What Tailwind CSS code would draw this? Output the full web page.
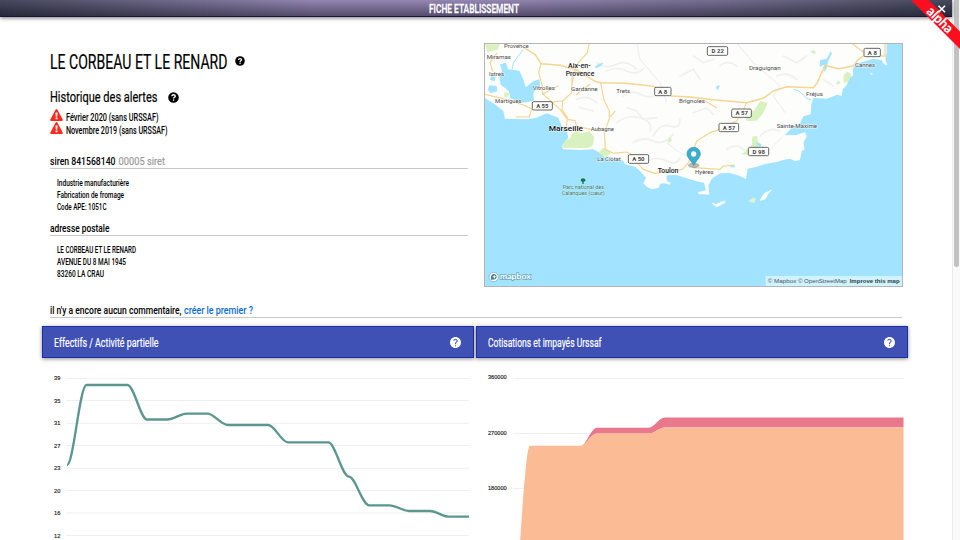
<!DOCTYPE html>
<html lang="fr">
<head>
<meta charset="utf-8">
<title>Fiche établissement</title>
<script src="https://cdn.jsdelivr.net/npm/@tailwindcss/browser@4"></script>
</head>
<body class="relative flex h-[540px] w-[960px] overflow-hidden bg-white font-['Roboto',sans-serif] text-black">
<svg class="hidden">
  <symbol id="help" viewBox="2 2 20 20"><path fill="currentColor" d="M12 2C6.48 2 2 6.48 2 12s4.48 10 10 10 10-4.480 10-10S17.520 2 12 2zm1 17h-2v-2h2v2zm2.070-7.750l-.9.920C13.450 12.900 13 13.500 13 15h-2v-.5c0-1.100.450-2.100 1.170-2.830l1.240-1.260c.370-.360.590-.860.590-1.410 0-1.100-.9-2-2-2s-2 .9-2 2H8c0-2.210 1.790-4 4-4s4 1.790 4 4c0 .880-.360 1.680-.930 2.250z"/></symbol>
  <symbol id="helpb" viewBox="0 0 24 24"><circle cx="12" cy="12" r="11.500" fill="currentColor"/><path d="M8.200 9.300c.3-2.200 1.900-3.300 3.900-3.300 2.200 0 3.700 1.200 3.700 3 0 2.500-3.600 2.700-3.600 5.100" fill="none" stroke="#fff" stroke-width="3"/><circle cx="12.100" cy="17.600" r="1.800" fill="#fff"/></symbol>
  <symbol id="warn" viewBox="0 0 26 24"><path fill="#ff2a1c" d="M11.300 1.200Q13-1 14.700 1.200L25.600 21.300Q26 24 23.600 24H2.400Q0 24 .4 21.300z"/><path fill="#fff" d="M11 7h4.200l-.6 8.300h-3zM11.200 17h3.800v3.500h-3.800z"/></symbol>
</svg>
<main class="flex w-[952px] shrink-0 flex-col">
  <header class="relative h-[17px] border-b border-[#17153a] bg-[linear-gradient(to_bottom,rgba(255,255,255,.08),rgba(20,20,30,.45)),linear-gradient(to_right,#36384e,#8a7cab_33%,#8b7cac_52%,#6a6287_75%,#36384e)] shadow-[0_1px_4px_rgba(0,0,0,.55)]">
    <svg class="block h-4 w-full overflow-visible"><text x="429" y="13.400" textLength="90" lengthAdjust="spacingAndGlyphs" fill="#fff" stroke="#fff" stroke-width=".3" font-size="12.500" font-weight="500">FICHE ETABLISSEMENT</text></svg>
  </header>

  <div class="flex h-[261px] pt-[26px] pl-[50px]">
    <section class="w-[418px] shrink-0">
      <div class="flex h-[42px] items-start gap-2 pt-[8px]">
        <svg class="h-5 w-[177px] overflow-visible"><text y="17.500" textLength="177.500" lengthAdjust="spacingAndGlyphs" font-size="21" stroke="#000" stroke-width=".2">LE CORBEAU ET LE RENARD</text></svg>
        <svg class="mt-[5px] h-[10px] w-[10px]"><use href="#helpb"/></svg>
      </div>
      <div class="flex h-[24px] items-start gap-[11px] pt-[5px]">
        <svg class="h-4 w-[107px] overflow-visible"><text y="12" textLength="107.500" lengthAdjust="spacingAndGlyphs" font-size="14.800" stroke="#000" stroke-width=".2">Historique des alertes</text></svg>
        <svg class="mt-[2px] h-[11px] w-[11px]"><use href="#helpb"/></svg>
      </div>
      <div class="flex h-[13px] gap-[3px]"><svg class="h-[12px] w-[13px]"><use href="#warn"/></svg><svg class="h-3 w-[93px] overflow-visible"><text y="11.700" textLength="92.500" lengthAdjust="spacingAndGlyphs" font-size="11" font-weight="500">Février 2020 (sans URSSAF)</text></svg></div>
      <div class="flex h-[13px] gap-[3px]"><svg class="h-[12px] w-[13px]"><use href="#warn"/></svg><svg class="h-3 w-[102px] overflow-visible"><text y="12" textLength="101.500" lengthAdjust="spacingAndGlyphs" font-size="11" font-weight="500">Novembre 2019 (sans URSSAF)</text></svg></div>
      <div class="mt-[19px] flex h-[15px] gap-[3px] border-b border-[#c8c8c8]">
        <svg class="h-3 w-[65px] overflow-visible"><text y="11.300" textLength="65.500" lengthAdjust="spacingAndGlyphs" font-size="11.800" font-weight="500">siren 841568140</text></svg>
        <svg class="h-3 w-[47px] overflow-visible"><text x=".5" y="11.300" textLength="46.500" lengthAdjust="spacingAndGlyphs" font-size="11.800" fill="#999" stroke="#999" stroke-width=".2">00005 siret</text></svg>
      </div>
      <div class="mt-[9px] pl-[7px]">
        <svg class="block h-3 w-20 overflow-visible"><text y="8" textLength="72" lengthAdjust="spacingAndGlyphs" font-size="9.600" font-weight="500">Industrie manufacturière</text></svg>
        <svg class="block h-3 w-20 overflow-visible"><text y="8" textLength="67" lengthAdjust="spacingAndGlyphs" font-size="9.600" font-weight="500">Fabrication de fromage</text></svg>
        <svg class="block h-3 w-20 overflow-visible"><text y="8" textLength="49.500" lengthAdjust="spacingAndGlyphs" font-size="9.600" font-weight="500">Code APE: 1051C</text></svg>
      </div>
      <div class="mt-[7px] h-[15px] border-b border-[#c8c8c8]"><svg class="block h-3 w-20 overflow-visible"><text y="11" textLength="59.500" lengthAdjust="spacingAndGlyphs" font-size="11.800" font-weight="500">adresse postale</text></svg></div>
      <div class="mt-[9px] pl-[7px]">
        <svg class="block h-3 w-20 overflow-visible"><text y="7.500" textLength="79" lengthAdjust="spacingAndGlyphs" font-size="9.600" font-weight="500">LE CORBEAU ET LE RENARD</text></svg>
        <svg class="block h-3 w-20 overflow-visible"><text y="7.500" textLength="69" lengthAdjust="spacingAndGlyphs" font-size="9.600" font-weight="500">AVENUE DU 8 MAI 1945</text></svg>
        <svg class="block h-3 w-20 overflow-visible"><text y="7.500" textLength="47" lengthAdjust="spacingAndGlyphs" font-size="9.600" font-weight="500">83260 LA CRAU</text></svg>
      </div>
    </section>

    <svg class="ml-[16px] h-[244px] w-[419px] shrink-0 border border-[#b5b5b8]" viewBox="15 24 1251 726" preserveAspectRatio="none">
      <rect x="0" y="0" width="1300" height="800" fill="#a2e4ff"/>
      <path fill="#fdfdfb" d="M0 10H1220V50L1216 70 1222 88 1212 85 1205 72 1180 68 1150 77 1130 82 1118 100 1120 118 1108 125 1100 148 1088 160 1085 180 1072 176 1040 188 1000 186 994 205 992 235 970 241 960 262 935 275 915 298 950 297 975 288 980 302 970 320 974 340 965 345 960 372 945 375 930 368 910 372 890 378 855 384 830 392 803 398 798 430 780 420 750 411 720 412 695 428 685 450 688 476 655 474 655 468 678 463 672 440 650 436 620 427 590 417 560 418 560 436 572 439 570 446 552 442 540 443 537 455 515 460 500 452 490 442 498 425 480 405 465 392 435 385 430 374 390 362 375 365 360 350 340 340 300 342 250 340 245 330 265 305 262 290 245 270 235 245 200 232 170 245 140 250 75 248 70 225 45 205 20 190 0 178z"/>
      <g fill="none" stroke="#f1f0ec" stroke-width="5" stroke-linecap="round">
        <path d="M350 80q30 20 60 5t60 15M380 105q30-15 60 0t50-8M430 180q25-20 50-5t60 0M440 215l30 10 20 25 40-5M410 260q30-25 70-15t30 40M460 320q30-20 60-5t60-20M520 300q20-40 50-30t30-20M290 190q30-15 60 10M300 215l40 10M720 90q20-20 50 0M910 60l40 20 30-20M890 120q30-15 60 10M840 300q30-30 60-15M740 340q30-20 50 0t40 0M1030 130l30 20M600 120l40-20 20 30M640 230l40-15 20 20M500 375q30-15 60 0t40-10M640 60l30 20 30-10"/>
      </g>
      <g fill="none" stroke="#e2e2ee" stroke-width="2">
        <path d="M470 21L480 70 540 140 560 200M770 21L820 80 900 150 880 180 915 230M560 320L600 350 640 370M860 350L910 300"/>
      </g>
      <g fill="#d8f1be">
        <path d="M15 25h45l-8 16-30 8zM245 335l10-20 15-8 8-17 15-5 10 8 25-8 14 18-3 25-15 8zM355 350l15-15 25 15-18 14zM800 255l-8-18 31-14 18-28 22 6-13 30-20 23zM785 355l30-25 2-28 14-3 3 20 10 22-22 18zM1090 120l12-14 12 10-8 20-14 6zM1068 140l8-6 6 8-10 4zM990 45l14-2 4 8-8 3zM72 170h14v12h-12zM563 310l10-6 2 12-10 4z"/>
      </g>
      <path fill="#a2e4ff" d="M60 85L78 80 84 100 118 104 130 130 137 154 160 136 178 130 181 147 160 170 162 194 130 200 92 188 86 165 62 146 57 118 66 105zM33 120l14 4-3 12-14-5zM28 148l22 2 2 16-20 6-8-10zM345 92l12-9 14-3-8 9-14 8zM1020 72l20-4 12-22 4 6-10 20-6 25-6 12-3-22-12 6zM707 155l8-8 4 4-6 12zM830 318l14 6-2 8-10-5zM752 386h12v8h-12z"/>
      <path d="M96 100L100 80 130 40M940 160q20 3 30 17t24 15" fill="none" stroke="#a2e4ff" stroke-width="3"/>
      <g fill="none" stroke="#f4d592" stroke-width="4.500" stroke-linejoin="round" stroke-linecap="round">
        <path d="M118 26L165 55 183 83 240 88 290 102 345 136 360 140 440 142 520 151 575 180 630 183 700 191 800 200 850 187 880 165 920 152 1000 155 1012 140 1035 88 1075 98 1120 90 1135 70 1150 60 1216 60"/>
        <path d="M183 83L176 110 187 150 187 172 240 220 262 250 285 254 290 270 330 280 375 280M327 24L322 50 295 80 276 125 275 170 248 195 187 200M362 140L372 192 388 225 388 248 373 290 376 340 400 352 440 348 480 368M187 175L235 150M248 195L246 220 262 245M50 52L30 80 38 105M15 175L90 193 125 205 155 218 148 243 108 243M262 250L258 275M405 226L388 245M280 125L275 150M290 175L330 145" stroke-width="3.500"/>
        <path d="M800 200L793 215 770 255 710 283 690 290 650 315 640 345 625 380 608 400 525 412 490 400 470 380M640 395L720 400 730 390 760 388M675 195L710 215M1118 24L1150 48M1215 24V60" stroke-width="3.500"/>
      </g>
      <g fill="#fff"><path d="M695 500l15 4 15-8 12 0 0-10-2 15-24 12-10-5zM840 492l12-20 26-12-12 12-10 18-16 4zM1168 110l12 3-6 3z"/><path fill="#dff5c8" d="M805 496l15-11 8 4-6 12z"/></g>
      <g font-family="Roboto,sans-serif" font-size="18" fill="#4a4a4a" stroke="#fff" stroke-opacity=".8" stroke-width="3" paint-order="stroke" stroke-linejoin="round">
        <text x="72" y="35" textLength="74" lengthAdjust="spacingAndGlyphs">Provence</text><text x="20" y="68" textLength="73" lengthAdjust="spacingAndGlyphs">Miramas</text><text x="27" y="119" textLength="45" lengthAdjust="spacingAndGlyphs">Istres</text><text x="158" y="161" textLength="67" lengthAdjust="spacingAndGlyphs">Vitrolles</text><text x="45" y="201" textLength="80" lengthAdjust="spacingAndGlyphs">Martigues</text><text x="273" y="164" textLength="80" lengthAdjust="spacingAndGlyphs">Gardanne</text><text x="409" y="170" textLength="42" lengthAdjust="spacingAndGlyphs">Trets</text><text x="597" y="201" textLength="78" lengthAdjust="spacingAndGlyphs">Brignoles</text><text x="332" y="286" textLength="70" lengthAdjust="spacingAndGlyphs">Aubagne</text><text x="352" y="374" textLength="70" lengthAdjust="spacingAndGlyphs">La Ciotat</text><text x="807" y="103" textLength="95" lengthAdjust="spacingAndGlyphs">Draguignan</text><text x="1125" y="92" textLength="60" lengthAdjust="spacingAndGlyphs">Cannes</text><text x="978" y="180" textLength="51" lengthAdjust="spacingAndGlyphs">Fréjus</text><text x="890" y="275" textLength="121" lengthAdjust="spacingAndGlyphs">Sainte-Maxime</text><text x="645" y="415" textLength="56" lengthAdjust="spacingAndGlyphs">Hyères</text>
        <g fill="#222" font-size="20" font-weight="500"><text x="264" y="95" textLength="68" lengthAdjust="spacingAndGlyphs">Aix-en-</text><text x="257" y="121" textLength="86" lengthAdjust="spacingAndGlyphs">Provence</text><text x="533" y="411" font-size="19" textLength="62" lengthAdjust="spacingAndGlyphs">Toulon</text><text x="206" y="285" font-size="24" textLength="103" lengthAdjust="spacingAndGlyphs" fill="#111">Marseille</text></g>
        <g fill="#3f7767" stroke="#d8f3f6" stroke-width="2" font-size="16"><text x="248" y="459" textLength="124" lengthAdjust="spacingAndGlyphs">Parc national des</text><text x="245" y="477" textLength="129" lengthAdjust="spacingAndGlyphs">Calanques (cœur)</text></g>
      </g>
      <path d="M302 433q0-6 7-6t8 6q-1 4-6 4v7h-4v-7q-5 0-5-4z" fill="#16784f"/>
      <g fill="#fff" stroke="#666" stroke-width="3"><rect x="157" y="197" width="60" height="25" rx="4"/><rect x="524" y="154" width="49" height="25" rx="4"/><rect x="445" y="356" width="61" height="26" rx="4"/><rect x="682" y="32" width="61" height="26" rx="4"/><rect x="1152" y="37" width="49" height="25" rx="4"/><rect x="755" y="219" width="59" height="25" rx="4"/><rect x="717" y="262" width="59" height="25" rx="4"/><rect x="805" y="334" width="61" height="25" rx="4"/></g>
      <g font-family="Roboto,sans-serif" font-size="18" font-weight="700" fill="#444" text-anchor="middle"><text x="187" y="216" textLength="36">A 55</text><text x="548" y="173" textLength="27">A 8</text><text x="475" y="375" textLength="37">A 50</text><text x="713" y="51" textLength="37">D 22</text><text x="1177" y="56" textLength="27">A 8</text><text x="785" y="238" textLength="37">A 57</text><text x="747" y="281" textLength="37">A 57</text><text x="836" y="353" textLength="37">D 98</text></g>
      <ellipse cx="641" cy="388" rx="17" ry="8" fill="#333" opacity=".35"/>
      <path d="M641 388C634 374 621 365 621 353a20 19 0 0 1 40 0C661 365 648 374 641 388z" fill="#3aaecb" stroke="#2b93ae" stroke-width="2"/><circle cx="641" cy="354" r="8" fill="#fff"/>
      <circle cx="41" cy="723" r="14" fill="#fff" stroke="#6ca5ba" stroke-width="2"/><path d="M33 731q-2-17 9-17 8 1 8 8 0 10-17 9z" fill="#4b8297"/><path d="M43 717l2 4 4 1-4 2-2 4-2-4-4-2 4-1z" fill="#fff"/>
      <text x="60" y="729" textLength="92" lengthAdjust="spacingAndGlyphs" font-family="Lato,sans-serif" font-size="24" font-weight="700" fill="#fff" stroke="#6ca5ba" stroke-width="4" paint-order="stroke">mapbox</text>
      <rect x="857" y="720" width="420" height="40" fill="#fff" opacity=".5"/>
      <g font-family="'Liberation Sans',sans-serif" font-size="18.500" fill="#46555c"><text x="863" y="741" textLength="86" lengthAdjust="spacingAndGlyphs">© Mapbox</text><text x="954" y="741" textLength="146" lengthAdjust="spacingAndGlyphs">© OpenStreetMap</text><text x="1109" y="741" textLength="150" lengthAdjust="spacingAndGlyphs" font-weight="700" fill="#333d43">Improve this map</text></g>
    </svg>
  </div>

  <div class="mt-[24px] ml-[50px] flex h-[16px] w-[852px] gap-[2px] border-b border-[#c8c8c8]">
    <svg class="h-[15px] w-[132px] overflow-visible"><text y="12.200" textLength="131.500" lengthAdjust="spacingAndGlyphs" font-size="11.800" font-weight="500">il n'y a encore aucun commentaire,</text></svg>
    <a class="text-[#0a6bd6]"><svg class="h-[15px] w-[69px] overflow-visible"><text y="12.200" textLength="69" lengthAdjust="spacingAndGlyphs" font-size="11.800" font-weight="500" fill="currentColor">créer le premier ?</text></svg></a>
  </div>

  <div class="mt-[8px] ml-[42px] flex gap-[2px]">
    <section class="w-[432px]">
      <div class="flex h-[32px] items-center justify-between border border-[#1c30a5] bg-[#3f51b5] pr-[12px] pl-[11px] text-white shadow-[0_1px_4px_rgba(0,0,0,.45)]">
        <svg class="h-4 w-[105px] overflow-visible"><text y="13" textLength="104.500" lengthAdjust="spacingAndGlyphs" font-size="12" fill="#fff" stroke="#fff" stroke-width=".2">Effectifs / Activité partielle</text></svg>
        <svg class="h-[11px] w-[11px]"><use href="#help"/></svg>
      </div>
      <svg class="block h-[182px] w-[432px]" viewBox="42 358 432 182">
        <path d="M66.500 378.500H469M66.500 400.500H469M66.500 423.300H469M66.500 445.500H469M66.500 468.300H469M66.500 490.500H469M66.500 513H469M66.500 535.500H469" stroke="#efefef"/>
        <g font-family="'Liberation Sans',sans-serif" font-size="5.700" fill="#222" stroke="#222" stroke-width=".15"><text x="54" y="380">39</text><text x="54" y="402.500">35</text><text x="54" y="425">31</text><text x="54" y="447.500">27</text><text x="54" y="470">23</text><text x="54" y="492.500">20</text><text x="54" y="515">16</text><text x="54" y="537.500">12</text></g>
        <path d="M67 465C73.700 465 79.500 385 86.500 385H127.500C134 385 140.500 419.500 147 419.500H167.500C174 419.500 180 413.600 187 413.600H207.500C214 413.600 221 425 228 425H268C275 425 281 442.300 288 442.300H328.500C335 442.300 342 476.700 349 476.700 355.500 476.700 362 505.300 369.500 505.300H389.500C396 505.300 402 511 409 511H430C437 511 442 516.700 449 516.700H469" fill="none" stroke="#5b968f" stroke-width="2.300"/>
      </svg>
    </section>
    <section class="w-[432px]">
      <div class="flex h-[32px] items-center justify-between border border-[#1c30a5] bg-[#3f51b5] pr-[12px] pl-[11px] text-white shadow-[0_1px_4px_rgba(0,0,0,.45)]">
        <svg class="h-4 w-[114px] overflow-visible"><text y="13" textLength="113.500" lengthAdjust="spacingAndGlyphs" font-size="12" fill="#fff" stroke="#fff" stroke-width=".2">Cotisations et impayés Urssaf</text></svg>
        <svg class="h-[11px] w-[11px]"><use href="#help"/></svg>
      </div>
      <svg class="block h-[182px] w-[432px]" viewBox="476 358 432 182">
        <path d="M513 378.500H903.500M513 433.500H903.500M513 488.500H903.500" stroke="#efefef"/>
        <g font-family="'Liberation Sans',sans-serif" font-size="5.600" fill="#222" stroke="#222" stroke-width=".15"><text x="488" y="379.300">360000</text><text x="488" y="434.800">270000</text><text x="488" y="489.800">180000</text></g>
        <path fill="#ea788c" d="M581 445.700C586 445.700 591 427.700 597 427.700H649C654 427.700 659 417.600 665 417.600H903.500V427.500H665C659 427.500 654 433.600 649 433.600H597C591 433.600 586 445.700 581 445.700z"/>
        <path fill="#fabb95" d="M513 598C519 598 524 445.700 530 445.700H581C586 445.700 591 433.600 597 433.600H649C654 433.600 659 427.500 665 427.500H903.500V598z"/>
      </svg>
    </section>
  </div>
</main>
<aside class="flex w-2 justify-center border-l border-[#ececec] bg-[#fafafa]"><div class="h-[267px] w-[5px] rounded-b-full bg-[#c1c1c1]"></div></aside>
<svg class="absolute top-0 right-0 h-[50px] w-[50px]" viewBox="910 0 50 50">
  <path d="M911 0H928.500L960 31.500V49z" fill="#fb0f1f"/>
  <path d="M938.500 5.800l6.500 6.500m0-6.500l-6.500 6.500" stroke="#fff" stroke-width="1.600"/>
  <text transform="translate(936.800 23.200) rotate(45)" text-anchor="middle" textLength="31" lengthAdjust="spacingAndGlyphs" font-family="Lato,sans-serif" font-size="14" font-weight="900" fill="#fff">alpha</text>
</svg>
</body>
</html>
